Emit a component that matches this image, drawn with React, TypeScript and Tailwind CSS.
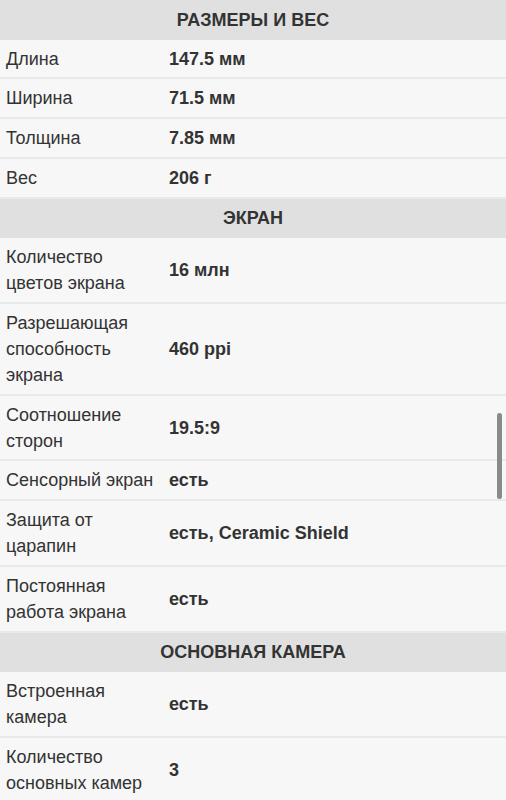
import React from "react";

type Row = { label: string[]; value: string };
type Section = { title: string; rows: Row[] };

const sections: Section[] = [
  {
    title: "РАЗМЕРЫ И ВЕС",
    rows: [
      { label: ["Длина"], value: "147.5 мм" },
      { label: ["Ширина"], value: "71.5 мм" },
      { label: ["Толщина"], value: "7.85 мм" },
      { label: ["Вес"], value: "206 г" },
    ],
  },
  {
    title: "ЭКРАН",
    rows: [
      { label: ["Количество", "цветов экрана"], value: "16 млн" },
      { label: ["Разрешающая", "способность", "экрана"], value: "460 ppi" },
      { label: ["Соотношение", "сторон"], value: "19.5:9" },
      { label: ["Сенсорный экран"], value: "есть" },
      { label: ["Защита от", "царапин"], value: "есть, Ceramic Shield" },
      { label: ["Постоянная", "работа экрана"], value: "есть" },
    ],
  },
  {
    title: "ОСНОВНАЯ КАМЕРА",
    rows: [
      { label: ["Встроенная", "камера"], value: "есть" },
      { label: ["Количество", "основных камер"], value: "3" },
    ],
  },
];

export default function App() {
  return (
    <div className="relative w-[506px] h-[800px] overflow-hidden bg-[#f7f7f7] text-[#333333] text-[18px] leading-[26px] font-['Liberation_Sans',Arial,sans-serif]">
      {sections.map((s) => (
        <div key={s.title}>
          <div className="h-[39.5px] bg-[#e0e0e0] flex items-center justify-center font-bold">
            {s.title}
          </div>
          {s.rows.map((r, i) => (
            <div
              key={i}
              className="flex items-center pt-[6px] pb-[5.75px] border-b-2 border-[#e9e9e9]"
            >
              <div className="w-[163px] pl-[6px] shrink-0 whitespace-nowrap">
                {r.label.map((l, j) => (
                  <div key={j}>{l}</div>
                ))}
              </div>
              <div className="pl-[6px] font-bold">{r.value}</div>
            </div>
          ))}
        </div>
      ))}
      <div className="absolute left-[497px] top-[413px] w-[5px] h-[86px] rounded-full bg-[#8a8a8a]" />
    </div>
  );
}
